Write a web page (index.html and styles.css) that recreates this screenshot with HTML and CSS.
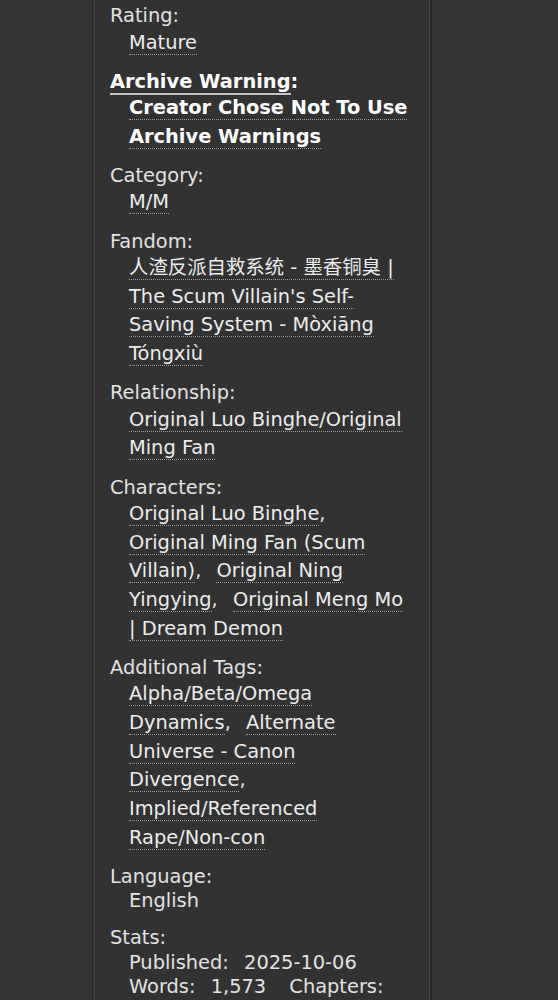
FILE: index.html
```html
<!DOCTYPE html>
<html lang="en">
<head>
<meta charset="utf-8">
<title>Work meta</title>
<link rel="stylesheet" href="styles.css">
</head>
<body>
<div class="page">
  <div class="panel">
    <dl class="meta">
      <dt>Rating:</dt>
      <dd class="taglist"><ul class="tags"><li><a class="tag" href="#">Mature</a></li></ul></dd>

      <dt class="strong"><a class="help" href="#">Archive Warning</a>:</dt>
      <dd class="taglist strong"><ul class="tags"><li><a class="tag" href="#">Creator Chose Not To Use Archive Warnings</a></li></ul></dd>

      <dt>Category:</dt>
      <dd class="taglist"><ul class="tags"><li><a class="tag" href="#">M/M</a></li></ul></dd>

      <dt>Fandom:</dt>
      <dd class="taglist"><ul class="tags"><li><a class="tag" href="#">人渣反派自救系统 - 墨香铜臭 | The Scum Villain's Self-Saving System - Mòxiāng Tóngxiù</a></li></ul></dd>

      <dt>Relationship:</dt>
      <dd class="taglist"><ul class="tags"><li><a class="tag" href="#">Original Luo Binghe/Original Ming Fan</a></li></ul></dd>

      <dt>Characters:</dt>
      <dd class="taglist"><ul class="tags">
        <li><a class="tag" href="#">Original Luo Binghe</a><span class="sep">,</span></li>
        <li><a class="tag" href="#">Original Ming Fan (Scum Villain)</a><span class="sep">,</span></li>
        <li><a class="tag" href="#">Original Ning Yingying</a><span class="sep">,</span></li>
        <li><a class="tag" href="#">Original Meng Mo | Dream Demon</a></li>
      </ul></dd>

      <dt>Additional Tags:</dt>
      <dd class="taglist"><ul class="tags">
        <li><a class="tag" href="#">Alpha/Beta/Omega Dynamics</a><span class="sep">,</span></li>
        <li><a class="tag" href="#">Alternate Universe - Canon Divergence</a><span class="sep">,</span></li>
        <li><a class="tag" href="#">Implied/Referenced Rape/Non-con</a></li>
      </ul></dd>

      <dt>Language:</dt>
      <dd>English</dd>

      <dt>Stats:</dt>
      <dd>
        <dl class="stats">
          <dt>Published:</dt> <dd>2025-10-06</dd> <dt>Words:</dt> <dd>1,573</dd> <dt>Chapters:</dt> <dd>1/1</dd> <dt>Kudos:</dt> <dd>12</dd> <dt>Hits:</dt> <dd>180</dd>
        </dl>
      </dd>
    </dl>
  </div>
</div>
</body>
</html>
```

FILE: styles.css
```css
html, body {
  margin: 0;
  padding: 0;
  background: #333333;
}

body {
  font-family: "DejaVu Sans", Verdana, "Noto Sans CJK SC", sans-serif;
  font-size: 19.4px;
  line-height: 24.5px;
  color: #e2e2e2;
}

.page {
  height: 1000px;
  overflow: hidden;
}

.panel {
  margin-left: 94px;
  width: 302px;
  min-height: 1000px;
  padding: 4px 17px 0 15px;
  border-left: 1px solid #434343;
  border-right: 1px solid #454545;
  box-shadow: 2px 0 0 #262626;
  background: #323232;
}

.meta {
  margin: 0;
}

.meta > dt {
  display: block;
  margin: 0;
}

.meta > dd {
  margin: 0 0 12.5px 19px;
}

.strong {
  font-weight: bold;
  color: #ffffff;
}

.help {
  color: #ffffff;
  text-decoration: none;
  border-bottom: 2px solid #c4c4c4;
}

.taglist {
  line-height: 28.65px;
}

.tags {
  list-style: none;
  margin: 0;
  padding: 0;
}

.tags li {
  display: inline;
}

.sep {
  margin-right: 9px;
}

.tag {
  color: #ececec;
  text-decoration: none;
  border-bottom: 1px dotted #9a9a9a;
}

.strong .tag {
  color: #ffffff;
}

.stats {
  margin: 0;
}

.stats dt,
.stats dd {
  display: inline;
  white-space: nowrap;
  margin: 0;
}

.stats dd {
  margin-left: 9px;
  margin-right: 17px;
}
```
